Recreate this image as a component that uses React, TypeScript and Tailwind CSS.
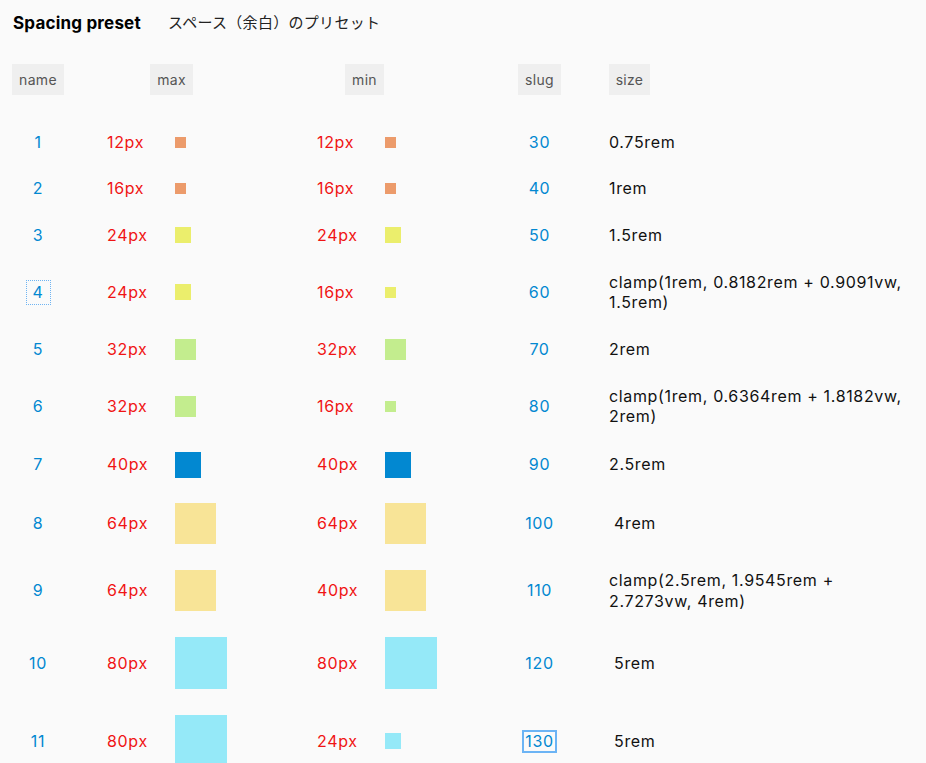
import React from "react";

type Row = {
  name: string;
  max: number;
  maxSq: number;
  min: number;
  minSq: number;
  slug: string;
  size: string;
  maxColor: string;
  minColor: string;
  indent?: boolean;
};

const orange = "bg-[#ec9b6b]";
const yellow = "bg-[#ebee6c]";
const green = "bg-[#c3ed8e]";
const blue = "bg-[#0288d1]";
const sand = "bg-[#f8e497]";
const cyan = "bg-[#95e9f8]";

const rows: Row[] = [
  { name: "1", max: 12, maxSq: 11, min: 12, minSq: 11, slug: "30", size: "0.75rem", maxColor: orange, minColor: orange },
  { name: "2", max: 16, maxSq: 11, min: 16, minSq: 11, slug: "40", size: "1rem", maxColor: orange, minColor: orange },
  { name: "3", max: 24, maxSq: 16, min: 24, minSq: 16, slug: "50", size: "1.5rem", maxColor: yellow, minColor: yellow },
  { name: "4", max: 24, maxSq: 16, min: 16, minSq: 11, slug: "60", size: "clamp(1rem, 0.8182rem + 0.9091vw, 1.5rem)", maxColor: yellow, minColor: yellow },
  { name: "5", max: 32, maxSq: 21, min: 32, minSq: 21, slug: "70", size: "2rem", maxColor: green, minColor: green },
  { name: "6", max: 32, maxSq: 21, min: 16, minSq: 11, slug: "80", size: "clamp(1rem, 0.6364rem + 1.8182vw, 2rem)", maxColor: green, minColor: green },
  { name: "7", max: 40, maxSq: 26, min: 40, minSq: 26, slug: "90", size: "2.5rem", maxColor: blue, minColor: blue },
  { name: "8", max: 64, maxSq: 41, min: 64, minSq: 41, slug: "100", size: "4rem", maxColor: sand, minColor: sand, indent: true },
  { name: "9", max: 64, maxSq: 41, min: 40, minSq: 41, slug: "110", size: "clamp(2.5rem, 1.9545rem + 2.7273vw, 4rem)", maxColor: sand, minColor: sand },
  { name: "10", max: 80, maxSq: 52, min: 80, minSq: 52, slug: "120", size: "5rem", maxColor: cyan, minColor: cyan, indent: true },
  { name: "11", max: 80, maxSq: 52, min: 24, minSq: 16, slug: "130", size: "5rem", maxColor: cyan, minColor: cyan, indent: true },
];

function Square({ size, color }: { size: number; color: string }) {
  // bigger swatches sit in a slightly taller cell, like the original table
  const cell = size >= 16 ? Math.max(size + (size > 30 ? 1 : 0), 23) : size;
  return (
    <div className="flex items-center" style={{ minHeight: cell }}>
      <div className={color} style={{ width: size, height: size }} />
    </div>
  );
}

export default function App() {
  return (
    <div className="min-h-screen bg-[#fafafa] text-[16px] tracking-[0.65px] text-[#111] font-['Inter','Liberation_Sans',sans-serif]">
      <div className="flex items-center pt-[12px] pl-[13px] h-[34px]">
        <h1 className="text-[17px] leading-[22px] tracking-[0.2px] font-bold text-black">Spacing preset</h1>
        <p className="ml-[27px] text-[15px] leading-[22px] tracking-[0.3px] text-[#222] font-['Inter','Noto_Sans_CJK_JP',sans-serif]">
          スペース（余白）のプリセット
        </p>
      </div>

      <div className="mt-[30px] flex pl-[12px] text-[14px] leading-[19px] tracking-[0.3px] text-[#555]">
        <span className="w-[52px] py-[6px] text-center bg-[#efefef]">name</span>
        <span className="ml-[86px] w-[43px] py-[6px] text-center bg-[#efefef]">max</span>
        <span className="ml-[152px] w-[39px] py-[6px] text-center bg-[#efefef]">min</span>
        <span className="ml-[134px] w-[43px] py-[6px] text-center bg-[#efefef]">slug</span>
        <span className="ml-[48px] w-[41px] py-[6px] text-center bg-[#efefef]">size</span>
      </div>

      <div className="mt-[24px] pl-[12px] pr-[8px]">
        {rows.map((r) => (
          <div
            key={r.name}
            className="grid grid-cols-[95px_68px_142px_68px_133px_91px_1fr] items-center py-[12.5px] leading-[21px]"
          >
            <div className="w-[52px] flex justify-center text-[#0288d1]">
              <span
                className={
                  r.name === "4"
                    ? "px-[6px] py-[1px] outline outline-1 outline-dotted outline-[#6fb4f2]"
                    : ""
                }
              >
                {r.name}
              </span>
            </div>
            <div className="text-[#f01414]">{r.max}px</div>
            <Square size={r.maxSq} color={r.maxColor} />
            <div className="text-[#f01414]">{r.min}px</div>
            <Square size={r.minSq} color={r.minColor} />
            <div className="w-[43px] flex justify-center text-[#0288d1]">
              <span className={r.name === "11" ? "px-[1px] border-2 border-[#6cb4f5] leading-[19px]" : ""}>
                {r.slug}
              </span>
            </div>
            <div className={r.indent ? "pl-[5px] leading-[20.5px]" : "leading-[20.5px]"}>{r.size}</div>
          </div>
        ))}
      </div>
    </div>
  );
}
